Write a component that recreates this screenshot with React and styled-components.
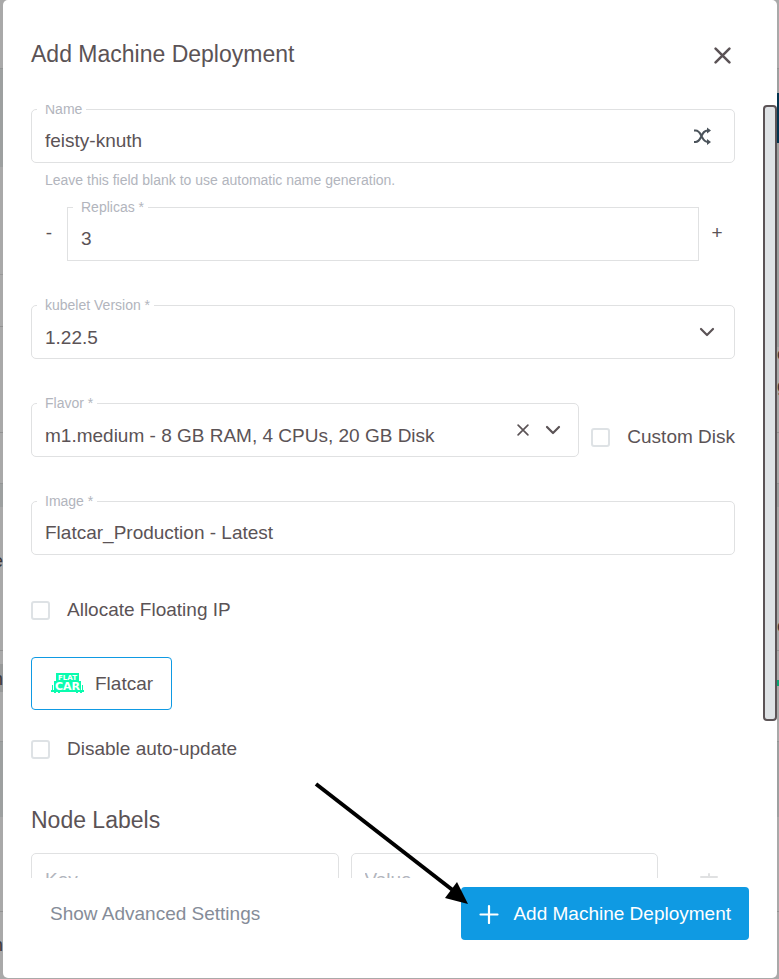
import React, { useState } from "react";
import styled, { createGlobalStyle } from "styled-components";

const ink = "#5b5356";
const muted = "#b2b5bd";
const line = "#e0e1e2";
const blue = "#0f9ae3";

const GlobalStyle = createGlobalStyle`
  *, *::before, *::after { box-sizing: border-box; }
  body {
    margin: 0;
    background: #a9a9a9;
    color: ${ink};
    font: 19px/24px "Liberation Sans", Arial, sans-serif;
  }
  button, input, select { font: inherit; color: inherit; }
  button { padding: 0; border: 0; background: none; cursor: pointer; }
  svg { display: block; flex: none; }
`;

const Page = styled.div`
  display: grid;
  grid-template-columns: 3px minmax(0, 1fr) 2px;
  height: 100vh;
  padding-bottom: 1px;
`;

const Backdrop = styled.div`
  display: flex;
  flex-direction: column;
  overflow: hidden;
`;

const Band = styled.div`
  flex: 0 0 ${(p) => p.$size}px;
  display: flex;
  align-items: center;
  justify-content: ${(p) => (p.$start ? "flex-start" : "flex-end")};
  overflow: hidden;
  background: ${(p) => p.$tone || "#a9a9a9"};
  border-top: 1px solid ${(p) => p.$edge || "transparent"};
  color: #3b3839;
`;

const Dialog = styled.form`
  display: flex;
  flex-direction: column;
  min-height: 0;
  margin: 0;
  background: #fff;
  border-radius: 5px;
`;

const Header = styled.header`
  flex: none;
  display: flex;
  align-items: center;
  justify-content: space-between;
  height: 105px;
  padding: 6px 43px 0 28px;
`;

const Title = styled.h1`
  margin: 0;
  padding-bottom: 4px;
  font-size: 23px;
  line-height: 32px;
  font-weight: 400;
`;

const SectionTitle = styled.h2`
  margin: 43px 0 17px;
  font-size: 23px;
  line-height: 32px;
  font-weight: 400;
`;

const IconButton = styled.button`
  flex: none;
  display: flex;
  align-items: center;
  justify-content: center;
  width: ${(p) => p.$width || 24}px;
  height: 28px;
`;

const Body = styled.div`
  flex: 1;
  min-height: 0;
  display: flex;
`;

const Scroller = styled.div`
  flex: 1;
  min-width: 0;
  overflow: auto;
  scrollbar-width: none;
  padding: 4px 28px 0;
`;

const ScrollTrack = styled.div`
  flex: none;
  width: 14px;
  padding-bottom: 3px;
`;

const ScrollThumb = styled.div`
  height: 80%;
  border: 2px solid ${ink};
  border-radius: 4px;
  background: #dee2e5;
`;

const FieldGroup = styled.div`
  flex: 1;
  min-width: 0;
  min-height: 98px;
`;

const FieldBox = styled.div`
  position: relative;
  display: flex;
  align-items: center;
  gap: 6px;
  height: 54px;
  padding-right: ${(p) => (p.$tight ? 13 : 15)}px;
  border: 1px solid ${line};
  border-radius: ${(p) => (p.$square ? 0 : 5)}px;
`;

const FieldLabel = styled.label`
  position: absolute;
  top: -9px;
  left: 5px;
  padding: 0 4px 0 8px;
  background: #fff;
  color: ${muted};
  font-size: 14px;
  line-height: 16px;
`;

const TextInput = styled.input`
  flex: 1;
  min-width: 0;
  height: 52px;
  padding: ${(p) => (p.$bare ? 0 : 9)}px 0 0 13px;
  border: 0;
  outline: 0;
  background: none;
  &::placeholder { color: ${muted}; opacity: 1; }
`;

const SelectInput = styled.select`
  flex: 1;
  min-width: 0;
  height: 52px;
  padding: 11px 0 0 13px;
  border: 0;
  outline: 0;
  background: none;
  appearance: none;
`;

const Hint = styled.p`
  margin: 9px 14px 0;
  color: ${muted};
  font-size: 14px;
  line-height: 16px;
`;

const StepperRow = styled.div`
  display: grid;
  grid-template-columns: 36px minmax(0, 1fr) 36px;
`;

const StepButton = styled.button`
  height: 52px;
`;

const FlavorRow = styled.div`
  display: flex;
  gap: 12px;
`;

const CheckLabel = styled.label`
  flex: none;
  display: flex;
  align-items: center;
  gap: 17px;
  height: ${(p) => p.$height}px;
`;

const CheckBox = styled.input`
  appearance: none;
  width: 19px;
  height: 19px;
  margin: 0;
  border: 2px solid #dee2e5;
  border-radius: 3px;
  background: #fff;
  &:checked { background: ${blue}; }
`;

const SystemButton = styled.button`
  display: flex;
  align-items: center;
  gap: 11px;
  height: 53px;
  margin: 36px 0 27px;
  padding: 0 18px 0 19px;
  border: 1px solid ${blue};
  border-radius: 4px;
  line-height: 22px;
`;

const LabelRow = styled.div`
  display: grid;
  grid-template-columns: minmax(0, 1fr) minmax(0, 1fr) 65px;
  column-gap: 12px;
  align-items: center;
`;

const TrashCell = styled.div`
  display: flex;
  justify-content: flex-end;
  color: ${line};
`;

const Footer = styled.footer`
  flex: none;
  display: flex;
  justify-content: space-between;
  padding: 9px 28px 38px;
`;

const AdvancedButton = styled.button`
  height: 53px;
  padding: 0 19px;
  color: #858c98;
`;

const SubmitButton = styled.button`
  position: relative;
  display: flex;
  align-items: center;
  gap: 14px;
  height: 53px;
  padding: 0 18px;
  border-radius: 4px;
  background: ${blue};
  color: #fff;
`;

const PointerArrow = styled.svg`
  position: absolute;
  top: -107px;
  left: -149px;
  pointer-events: none;
`;

function CrossIcon({ size, width = 2 }) {
  return (
    <svg width={size} height={size} viewBox="0 0 16 16" stroke="currentColor" strokeWidth={width} strokeLinecap="round" aria-hidden="true">
      <path d="M1.5 1.5 14.5 14.5M14.5 1.5 1.5 14.5" />
    </svg>
  );
}

function ChevronIcon() {
  return (
    <svg width="24" height="24" viewBox="0 0 24 24" fill="none" stroke="currentColor" strokeWidth="2.2" strokeLinecap="round" strokeLinejoin="round" aria-hidden="true">
      <path d="M6 9 12 15 18 9" />
    </svg>
  );
}

function ShuffleIcon() {
  return (
    <svg width="18" height="18" viewBox="0 0 18 18" fill="none" stroke="#4b535b" strokeWidth="2.1" aria-hidden="true">
      <path d="M1 3.500H2.500C6 3.500 7 6 8.500 9S11 15 15 15M1 15H2.500C6 15 7 12 8.500 9S11 3.500 15 3.500" />
      <path d="M14 .5 18 3.500 14 6.500ZM14 12 18 15 14 18Z" fill="#4b535b" stroke="none" />
    </svg>
  );
}

function PlusIcon() {
  return (
    <svg width="20" height="20" viewBox="0 0 20 20" stroke="currentColor" strokeWidth="2.2" strokeLinecap="round" aria-hidden="true">
      <path d="M10 2V19M1.5 10.5H18.5" />
    </svg>
  );
}

function TrashIcon() {
  return (
    <svg width="20" height="22" viewBox="0 0 20 22" fill="none" stroke="currentColor" strokeWidth="2" strokeLinecap="round" aria-hidden="true">
      <path d="M2 8H18M10 5V7" />
      <path d="M5 13V21H15V13M8 14V18M12 14V18" />
    </svg>
  );
}

function FlatcarLogo() {
  return (
    <svg width="33" height="21" viewBox="0 0 33 21" fill="#09fcae" aria-hidden="true">
      <path d="M5 0H28V8H30V17H31V12H32V17H33V19H31V20H29V19H27V20H25V19H9V20H7V19H5V20H3V19H0V17H1V12H2V17H3V8H5Z" />
      <g fill="#fff" fontFamily="DejaVu Sans, Liberation Sans, sans-serif" fontWeight="700" textAnchor="middle">
        <text x="16.5" y="7" fontSize="7">FLAT</text>
        <text x="16.5" y="17" fontSize="11">CAR</text>
      </g>
    </svg>
  );
}

function Field({ id, label, square, tight, children, hint }) {
  return (
    <FieldGroup>
      <FieldBox $square={square} $tight={tight}>
        {children}
        <FieldLabel htmlFor={id}>{label}</FieldLabel>
      </FieldBox>
      {hint && <Hint>{hint}</Hint>}
    </FieldGroup>
  );
}

function Check({ label, height }) {
  return (
    <CheckLabel $height={height}>
      <CheckBox type="checkbox" />
      {label}
    </CheckLabel>
  );
}

export default function App() {
  const [name, setName] = useState("feisty-knuth");
  const [replicas, setReplicas] = useState(3);
  return (
    <>
      <GlobalStyle />
      <Page>
        <Backdrop aria-hidden="true">
          <Band $size={68} />
          <Band $size={99} $tone="#9da0a0" $edge="#939595" />
          <Band $size={107} />
          <Band $size={52} $edge="#999" />
          <Band $size={106} $edge="#929292" />
          <Band $size={51} $edge="#929292" />
          <Band $size={24} $tone="#9da0a0" $edge="#939595" />
          <Band $size={107}>e</Band>
          <Band $size={36} />
          <Band $size={14} $edge="#929292" />
          <Band $size={28} $tone="#979999">m</Band>
          <Band $size={49} />
          <Band $size={76} $tone="#9da0a0" $edge="#939595" />
          <Band $size={94} />
          <Band $size={67} $edge="#929292">n</Band>
        </Backdrop>
        <Dialog onSubmit={(e) => e.preventDefault()}>
          <Header>
            <Title>Add Machine Deployment</Title>
            <IconButton type="button" aria-label="Close">
              <CrossIcon size={17} width={2.4} />
            </IconButton>
          </Header>
          <Body>
            <Scroller>
              <Field id="name" label="Name" hint="Leave this field blank to use automatic name generation.">
                <TextInput id="name" value={name} onChange={(e) => setName(e.target.value)} />
                <IconButton type="button" $width={34} aria-label="Generate name">
                  <ShuffleIcon />
                </IconButton>
              </Field>
              <StepperRow>
                <StepButton type="button" aria-label="Decrease" onClick={() => setReplicas(replicas - 1)}>-</StepButton>
                <Field id="replicas" label="Replicas *" square>
                  <TextInput id="replicas" inputMode="numeric" value={replicas} onChange={(e) => setReplicas(Number(e.target.value) || 0)} />
                </Field>
                <StepButton type="button" aria-label="Increase" onClick={() => setReplicas(replicas + 1)}>+</StepButton>
              </StepperRow>
              <Field id="kubelet" label="kubelet Version *">
                <SelectInput id="kubelet"><option>1.22.5</option></SelectInput>
                <ChevronIcon />
              </Field>
              <FlavorRow>
                <Field id="flavor" label="Flavor *" tight>
                  <SelectInput id="flavor"><option>m1.medium - 8 GB RAM, 4 CPUs, 20 GB Disk</option></SelectInput>
                  <IconButton type="button" aria-label="Clear flavor">
                    <CrossIcon size={12} width={2.2} />
                  </IconButton>
                  <ChevronIcon />
                </Field>
                <Check label="Custom Disk" height={68} />
              </FlavorRow>
              <Field id="image" label="Image *">
                <TextInput id="image" defaultValue="Flatcar_Production - Latest" />
              </Field>
              <Check label="Allocate Floating IP" height={22} />
              <SystemButton type="button">
                <FlatcarLogo />
                Flatcar
              </SystemButton>
              <Check label="Disable auto-update" height={24} />
              <SectionTitle>Node Labels</SectionTitle>
              <LabelRow>
                <FieldBox><TextInput $bare placeholder="Key" aria-label="Key" /></FieldBox>
                <FieldBox><TextInput $bare placeholder="Value" aria-label="Value" /></FieldBox>
                <TrashCell>
                  <IconButton type="button" $width={53} aria-label="Delete label"><TrashIcon /></IconButton>
                </TrashCell>
              </LabelRow>
            </Scroller>
            <ScrollTrack><ScrollThumb /></ScrollTrack>
          </Body>
          <Footer>
            <AdvancedButton type="button">Show Advanced Settings</AdvancedButton>
            <SubmitButton type="submit">
              <PlusIcon />
              Add Machine Deployment
              <PointerArrow width="160" height="128" viewBox="0 0 160 128" aria-hidden="true">
                <path d="M4 4 147 115" stroke="#000" strokeWidth="4" />
                <path d="M156 124 145 102 133 118Z" />
              </PointerArrow>
            </SubmitButton>
          </Footer>
        </Dialog>
        <Backdrop aria-hidden="true">
          <Band $size={68} />
          <Band $size={25} $tone="#9da0a0" $edge="#939595" />
          <Band $size={50} $tone="#003450" />
          <Band $size={204} $tone="#9da0a0" />
          <Band $size={12} $start>o</Band>
          <Band $size={14} />
          <Band $size={24} $start>g</Band>
          <Band $size={35} />
          <Band $size={51} $edge="#929292" />
          <Band $size={24} $tone="#9da0a0" $edge="#939595" />
          <Band $size={106} />
          <Band $size={24} $start>c</Band>
          <Band $size={13} />
          <Band $size={30} $edge="#929292" />
          <Band $size={6} $tone="#08a675" />
          <Band $size={55} />
          <Band $size={76} $tone="#9da0a0" $edge="#939595" />
          <Band $size={94} />
          <Band $size={67} $edge="#929292" />
        </Backdrop>
      </Page>
    </>
  );
}
